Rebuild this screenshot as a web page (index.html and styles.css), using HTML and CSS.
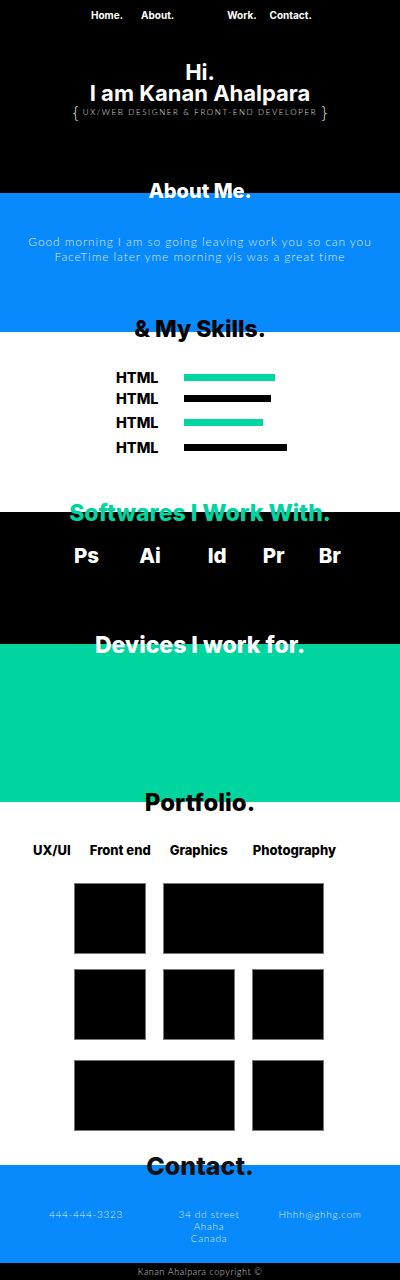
FILE: index.html
```
<!DOCTYPE html>
<html lang="en">

<head>
    <meta charset="UTF-8">
    <meta name="viewport" content="width=device-width, initial-scale=1.0">
    <title>Kanan Ahalpara</title>
    <link rel="stylesheet" href="styles.css">
</head>

<body>
    <!-- Header -->
    <header class="hero">
        <nav class="nav">
            <a href="#home" class="nav-home">Home.</a>
            <a href="#about" class="nav-about">About.</a>
            <a href="#work" class="nav-work">Work.</a>
            <a href="#contact" class="nav-contact">Contact.</a>
        </nav>
        <h1 class="hero-title"><span class="hi">Hi.</span><span class="name">I am Kanan Ahalpara</span></h1>
        <p class="hero-sub"><span class="brace">{</span> UX/WEB DESIGNER &amp; FRONT-END DEVELOPER <span class="brace">}</span></p>
    </header>

    <!-- About -->
    <section class="section about" id="about">
        <h2>About Me.</h2>
        <p class="about-text">Good morning I am so going leaving work you so can you FaceTime later yme morning yis was a great time</p>
    </section>

    <!-- Skills -->
    <section class="section skills">
        <h2>&amp; My Skills.</h2>
        <ul class="skill-list">
            <li class="skill"><span class="skill-name">HTML</span><span class="bar green" style="width: 91px"></span></li>
            <li class="skill"><span class="skill-name">HTML</span><span class="bar black" style="width: 87px"></span></li>
            <li class="skill"><span class="skill-name">HTML</span><span class="bar green" style="width: 79px"></span></li>
            <li class="skill"><span class="skill-name">HTML</span><span class="bar black" style="width: 103px"></span></li>
        </ul>
    </section>

    <!-- Softwares -->
    <section class="section software">
        <h2>Softwares I Work With.</h2>
        <ul class="soft-list">
            <li class="ps">Ps</li>
            <li class="ai">Ai</li>
            <li class="id">Id</li>
            <li class="pr">Pr</li>
            <li class="br">Br</li>
        </ul>
    </section>

    <!-- Devices -->
    <section class="section devices">
        <h2>Devices I work for.</h2>
    </section>

    <!-- Portfolio -->
    <section class="section portfolio" id="work">
        <h2>Portfolio.</h2>
        <ul class="tabs">
            <li>UX/UI</li>
            <li>Front end</li>
            <li>Graphics</li>
            <li>Photography</li>
        </ul>
        <div class="grid">
            <div class="tile"></div>
            <div class="tile wide"></div>
            <div class="tile"></div>
            <div class="tile"></div>
            <div class="tile"></div>
            <div class="tile wide low"></div>
            <div class="tile low"></div>
        </div>
    </section>

    <!-- Contact -->
    <section class="section contact" id="contact">
        <h2>Contact.</h2>
        <div class="contact-row">
            <p class="phone">444-444-3323</p>
            <p class="address">34 dd street<br>Ahaha<br>Canada</p>
            <p class="email">Hhhh@ghhg.com</p>
        </div>
    </section>

    <footer class="footer">Kanan Ahalpara copyright &copy;</footer>
</body>

</html>
```

FILE: styles.css
```
body {
    margin: 0;
    background-color: #000;
    font-family: Inter, "Open Sans", sans-serif;
}

h1,
h2,
p,
ul {
    margin: 0;
    padding: 0;
}

ul {
    list-style: none;
}

/* header */
.hero {
    height: 193px;
    background-color: #000;
    color: #fff;
    display: flow-root;
}

.nav {
    display: flex;
    padding-left: 91px;
    padding-top: 9px;
    font-size: 10px;
    font-weight: 700;
}

.nav a {
    color: #fff;
    text-decoration: none;
}

.nav-about {
    margin-left: 18px;
}

.nav-work {
    margin-left: 53px;
}

.nav-contact {
    margin-left: 13px;
}

.hero-title {
    display: flex;
    flex-direction: column;
    align-items: center;
    gap: 1px;
    margin-top: 41px;
    font-size: 22px;
    line-height: 20px;
    font-weight: 700;
}

.hero-sub {
    text-align: center;
    font-family: Lato, sans-serif;
    font-size: 8px;
    font-weight: 300;
    letter-spacing: 1.6px;
    line-height: 18px;
    color: #e4e4e4;
}

.brace {
    font-family: Inter, sans-serif;
    font-size: 17px;
    font-weight: 200;
    vertical-align: middle;
    letter-spacing: 0;
    color: #f2f2f2;
}

/* sections */
.section {
    display: flow-root;
    text-align: center;
}

.section h2 {
    margin-top: -12px;
    font-size: 23px;
    line-height: 26px;
    font-weight: 800;
}

.about {
    height: 139px;
    background-color: #0889fc;
    color: #fff;
}

.about h2 {
    margin-top: -15px;
    font-size: 20px;
}

.about-text {
    margin: 30px auto 0;
    width: 360px;
    font-family: Lato, sans-serif;
    font-size: 12px;
    line-height: 15px;
    font-weight: 300;
    letter-spacing: 0.9px;
    color: rgba(255, 255, 255, 0.85);
}

.skills {
    height: 180px;
    background-color: #fff;
    color: #000;
}

.skills h2 {
    margin-top: -16px;
}

.skill-list {
    margin-top: 25px;
    padding-left: 116px;
}

.skill {
    display: flex;
    align-items: center;
    height: 21px;
}

.skill:nth-child(3) {
    margin-top: 3px;
}

.skill:nth-child(4) {
    margin-top: 4px;
}

.skill-name {
    width: 68px;
    text-align: left;
    font-size: 14.5px;
    font-weight: 800;
}

.bar {
    height: 7px;
}

.bar.green {
    background-color: #00d49f;
}

.bar.black {
    background-color: #000;
}

.software {
    height: 132px;
    background-color: #000;
}

.software h2 {
    color: #00d49f;
}

.soft-list {
    display: flex;
    padding-left: 74px;
    margin-top: 17px;
    color: #fff;
    font-size: 20.5px;
    font-weight: 800;
}

.soft-list .ai {
    margin-left: 40px;
}

.soft-list .id {
    margin-left: 47px;
}

.soft-list .pr {
    margin-left: 36px;
}

.soft-list .br {
    margin-left: 34px;
}

.devices {
    height: 158px;
    background-color: #00d49f;
    color: #fff;
}

.portfolio {
    height: 363px;
    background-color: #fff;
    color: #000;
}

.portfolio h2 {
    font-size: 24px;
}

.tabs {
    display: flex;
    padding-left: 33px;
    margin-top: 26px;
    font-size: 13px;
    font-weight: 800;
    gap: 19px;
}

.tabs li:nth-child(4) {
    margin-left: 6px;
}

.grid {
    display: grid;
    grid-template-columns: repeat(3, 72px);
    column-gap: 17px;
    row-gap: 15px;
    margin: 25px 0 0 74px;
}

.tile {
    height: 71px;
    background-color: #000;
    border: 1px solid #777;
    box-sizing: border-box;
}

.tile.wide {
    grid-column: span 2;
}

.tile.low {
    margin-top: 5px;
}

.contact {
    height: 98px;
    background-color: #0889fc;
    color: #111;
}

.contact h2 {
    font-size: 25px;
}

.contact-row {
    display: flex;
    margin-top: 29px;
    font-family: Lato, sans-serif;
    font-size: 10px;
    line-height: 12px;
    font-weight: 300;
    letter-spacing: 0.7px;
    color: rgba(255, 255, 255, 0.85);
}

.phone {
    width: 172px;
}

.address {
    width: 74px;
}

.email {
    width: 148px;
}

.footer {
    height: 17px;
    line-height: 17px;
    background-color: #000;
    color: #ccc;
    text-align: center;
    font-family: Lato, sans-serif;
    font-size: 9px;
    font-weight: 300;
    letter-spacing: 0.6px;
}
```
